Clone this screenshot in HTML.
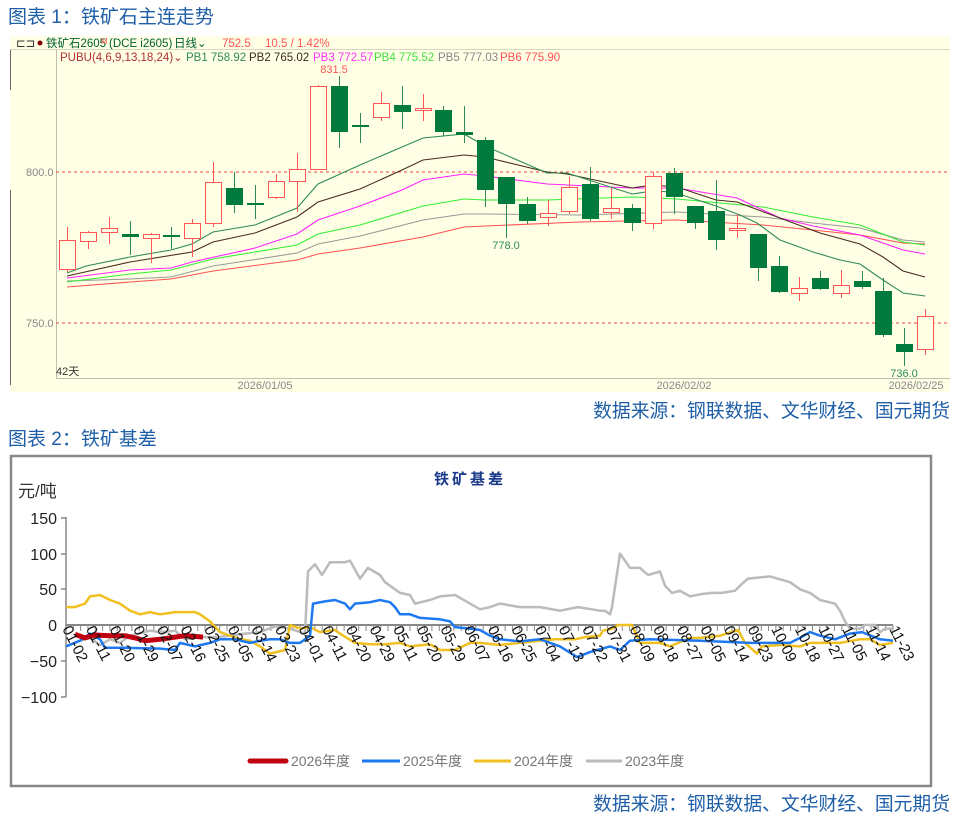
<!DOCTYPE html>
<html><head><meta charset="utf-8"><style>
html,body{margin:0;padding:0;background:#fff;width:962px;height:817px;overflow:hidden}
svg{position:absolute;left:0;top:0}
text{font-family:"Liberation Sans","Noto Sans CJK SC",sans-serif}
</style></head><body>
<svg width="962" height="817" viewBox="0 0 962 817" xmlns="http://www.w3.org/2000/svg">
<!-- Titles -->
<text x="8" y="23" font-size="19" fill="#1F5FA8">图表 1：铁矿石主连走势</text>
<text x="8" y="445" font-size="19" fill="#1F5FA8">图表 2：铁矿基差</text>
<text x="950" y="417" font-size="18.8" fill="#1F5FA8" text-anchor="end">数据来源：钢联数据、文华财经、国元期货</text>
<text x="950" y="810" font-size="18.8" fill="#1F5FA8" text-anchor="end">数据来源：钢联数据、文华财经、国元期货</text>

<!-- Chart 1 background -->
<rect x="10" y="36" width="940" height="356" fill="#FFFFE6"/>
<line x1="10" y1="49.5" x2="950" y2="49.5" stroke="#d8d8c0" stroke-width="1"/>
<line x1="56.5" y1="50" x2="56.5" y2="378" stroke="#c0c0b0" stroke-width="1"/>
<line x1="56" y1="378.5" x2="950" y2="378.5" stroke="#c0c0b0" stroke-width="1"/>
<line x1="10.5" y1="50" x2="10.5" y2="90" stroke="#666" stroke-width="1"/>
<line x1="10.5" y1="190" x2="10.5" y2="385" stroke="#666" stroke-width="1"/>
<g font-size="11.5">
<text x="16" y="47" fill="#333">⊏⊐</text>
<circle cx="40" cy="43" r="2.5" fill="#800000"/>
<text x="46" y="47" fill="#006030">铁矿石2605</text>
<text x="101" y="44" fill="#f55" font-size="8">M</text>
<text x="109" y="47" fill="#006030">(DCE i2605)</text>
<text x="174" y="47" fill="#006030">日线⌄</text>
<text x="222" y="47" fill="#f55">752.5</text>
<text x="265" y="47" fill="#f55">10.5 / 1.42%</text>
<text x="60" y="61" fill="#b03030">PUBU(4,6,9,13,18,24)⌄</text>
<text x="186" y="61" fill="#2E8B57">PB1 758.92</text>
<text x="249" y="61" fill="#3a2a20">PB2 765.02</text>
<text x="313" y="61" fill="#ff33ff">PB3 772.57</text>
<text x="374" y="61" fill="#44dd44">PB4 775.52</text>
<text x="438" y="61" fill="#888">PB5 777.03</text>
<text x="500" y="61" fill="#ff5050">PB6 775.90</text>
</g>
<line x1="56" y1="172" x2="950" y2="172" stroke="#ee4444" stroke-dasharray="3,3" stroke-width="1"/>
<line x1="56" y1="323" x2="950" y2="323" stroke="#ee4444" stroke-dasharray="3,3" stroke-width="1"/>
<g font-size="11" fill="#888">
<text x="26" y="176">800.0</text>
<text x="26" y="327">750.0</text>
<text x="265" y="389" text-anchor="middle">2026/01/05</text>
<text x="684" y="389" text-anchor="middle">2026/02/02</text>
<text x="916" y="389" text-anchor="middle">2026/02/25</text>
</g>
<text x="56" y="375" font-size="11" fill="#333">42天</text>
<text x="334" y="73" font-size="11" fill="#f55" text-anchor="middle">831.5</text>
<text x="506" y="249" font-size="11" fill="#2E8B57" text-anchor="middle">778.0</text>
<text x="904" y="377" font-size="11" fill="#2E8B57" text-anchor="middle">736.0</text>

<!-- MA lines -->
<g fill="none" stroke-width="1.1">
<polyline stroke="#ff5050" points="67,287 130,282 171,279 213,271 297,260 318,254 360,248 423,237 464,227 485,226 580,222 677,220 763,225 813,230 860,235 903,243 925,244"/>
<polyline stroke="#999" points="67,281 130,279 171,277 213,266 297,253 318,244 360,236 423,220 464,214 485,214 580,215 677,212 763,217 813,223 860,228 903,240 925,242"/>
<polyline stroke="#33ee33" points="67,282 130,274 171,270 213,259 297,245 318,234 360,225 423,206 464,199 485,200 547,200 632,197 677,199 763,207 813,217 860,225 903,242 925,245"/>
<polyline stroke="#ff22ff" points="67,278 130,270 171,268 192,262 255,248 297,234 318,220 360,206 402,190 423,180 464,174 485,176 547,184 632,188 677,188 737,198 780,218 813,226 860,235 903,250 925,254"/>
<polyline stroke="#4a2a20" points="67,276 130,262 192,252 213,242 255,233 297,217 318,202 360,189 402,170 423,160 464,155 485,157 547,172 567,174 632,188 653,185 677,187 716,200 737,202 780,218 820,233 860,244 883,257 903,271 925,277"/>
<polyline stroke="#2E8B57" points="67,273 86,266 130,257 171,250 192,244 213,232 255,225 297,208 318,184 360,165 402,147 423,138 464,134 485,146 547,173 567,173 632,194 653,191 673,192 716,206 740,215 757,223 780,240 813,252 840,260 860,264 883,280 903,293 925,296"/>
</g>

<!-- Candles -->
<g id="c" stroke-width="1"></g>

<!-- Chart 2 -->
<rect x="11" y="456" width="920" height="330" fill="#fff" stroke="#888" stroke-width="2.5"/>
<text x="470" y="484" font-size="15" font-weight="bold" fill="#1a3a8a" text-anchor="middle" font-family="Liberation Serif,'Noto Serif CJK SC',serif" letter-spacing="3">铁矿基差</text>
<text x="18" y="497" font-size="17" fill="#333">元/吨</text>
<g font-size="16" fill="#222" text-anchor="end">
<text x="57" y="524">150</text>
<text x="57" y="560">100</text>
<text x="57" y="595">50</text>
<text x="57" y="631">0</text>
<text x="57" y="667">−50</text>
<text x="57" y="703">−100</text>
</g>
<g stroke="#888" stroke-width="1.5">
<line x1="66" y1="517" x2="66" y2="697"/>
<line x1="61" y1="518" x2="66" y2="518"/>
<line x1="61" y1="554" x2="66" y2="554"/>
<line x1="61" y1="589" x2="66" y2="589"/>
<line x1="61" y1="661" x2="66" y2="661"/>
<line x1="61" y1="697" x2="66" y2="697"/>
</g>
<g id="ticks" stroke="#888" stroke-width="1"></g>
<line x1="66" y1="625" x2="893" y2="625" stroke="#888" stroke-width="2"/>
<g fill="none" stroke-linejoin="round" stroke-width="2.5">
<polyline id="gray" stroke="#bbb"/>
<polyline id="yellow" stroke="#F0C020"/>
<polyline id="blue" stroke="#1E78F0"/>
<polyline id="red" stroke="#C00010" stroke-width="5"/>
</g>
<g id="labels" font-size="15" fill="#111"></g>
<g font-size="14" fill="#777">
<line x1="250" y1="761" x2="286" y2="761" stroke="#C00010" stroke-width="5" stroke-linecap="round"/>
<text x="291" y="766">2026年度</text>
<line x1="362" y1="761" x2="400" y2="761" stroke="#1E78F0" stroke-width="3"/>
<text x="403" y="766">2025年度</text>
<line x1="474" y1="761" x2="511" y2="761" stroke="#F0C020" stroke-width="3"/>
<text x="514" y="766">2024年度</text>
<line x1="586" y1="761" x2="622" y2="761" stroke="#bbb" stroke-width="3"/>
<text x="625" y="766">2023年度</text>
</g>
</svg>
<script>
var NS="http://www.w3.org/2000/svg";
function el(t,a,p){var e=document.createElementNS(NS,t);for(var k in a)e.setAttribute(k,a[k]);p.appendChild(e);return e;}
var C=[[67,240,269,227,272,'r'],[88,232,241,231,249,'r'],[109,228,232,217,244,'r'],[130,234,237,221,255,'g'],[151,234,238,233,263,'r'],[171,235,237,227,249,'g'],[192,223,238,219,257,'r'],[213,182,223,162,227,'r'],[234,188,205,172,213,'g'],[255,203,204,185,219,'g'],[276,181,197,174,199,'r'],[297,169,181,153,212,'r'],[318,86,169,85,169,'r'],[339,86,132,76,148,'g'],[360,125,127,113,143,'g'],[381,103,117,92,121,'r'],[402,105,112,86,129,'g'],[423,108,110,94,121,'r'],[443,110,132,106,136,'g'],[464,132,135,106,143,'g'],[485,140,190,137,207,'g'],[506,177,204,177,238,'g'],[527,204,221,197,224,'g'],[548,213,217,200,226,'r'],[569,187,211,177,214,'r'],[590,184,219,167,221,'g'],[611,208,212,188,219,'r'],[632,208,223,204,231,'g'],[653,176,223,172,229,'r'],[674,173,197,168,214,'g'],[695,206,223,206,229,'g'],[716,211,240,180,250,'g'],[737,228,230,214,238,'r'],[758,234,268,234,281,'g'],[779,266,292,256,293,'g'],[799,288,293,277,301,'r'],[820,278,289,271,290,'g'],[841,285,293,270,298,'r'],[862,281,287,271,289,'g'],[883,291,335,278,337,'g'],[904,344,352,328,366,'g'],[925,316,349,309,355,'r']];
var g=document.getElementById('c');
C.forEach(function(c){var x=c[0]+0.5;
 if(c[5]=='g'){el('line',{x1:x,y1:c[3],x2:x,y2:c[4],stroke:'#2E8B57'},g);el('rect',{x:c[0]-8,y:c[1],width:17,height:Math.max(2,c[2]-c[1]),fill:'#007A3D'},g);}
 else{el('line',{x1:x,y1:c[3],x2:x,y2:c[1],stroke:'#f55'},g);el('line',{x1:x,y1:c[2],x2:x,y2:c[4],stroke:'#f55'},g);el('rect',{x:c[0]-7.5,y:c[1]+0.5,width:16,height:Math.max(1,c[2]-c[1]),fill:'#FFFFE6',stroke:'#f55'},g);}
});
function pts(a){return a.map(function(p){return p[0]+','+(625-p[1]*0.714).toFixed(1)}).join(' ');}
document.getElementById('gray').setAttribute('points',pts([[66,-30],[80,-22],[90,-18],[100,-28],[110,-20],[120,-25],[130,-15],[150,-8],[160,-10],[175,-8],[185,-20],[200,-17],[215,-17],[230,-15],[245,-12],[260,-10],[275,-2],[290,-5],[300,-10],[305,-12],[308,75],[315,85],[322,70],[330,88],[345,88],[350,90],[360,65],[368,80],[380,70],[385,60],[395,50],[400,45],[410,42],[415,30],[430,35],[440,40],[455,42],[470,30],[480,22],[490,25],[500,30],[520,25],[540,25],[560,20],[578,25],[600,20],[605,20],[610,15],[612,25],[620,100],[625,90],[630,80],[640,80],[648,70],[660,75],[665,55],[672,45],[680,48],[690,40],[700,43],[712,45],[722,45],[735,48],[740,55],[748,65],[770,68],[790,60],[800,50],[810,45],[820,35],[835,30],[840,20],[845,5],[850,-5],[860,-5],[865,0],[875,0],[880,-10],[885,-5],[893,-5]]));
document.getElementById('yellow').setAttribute('points',pts([[66,25],[75,25],[85,30],[90,40],[100,42],[110,35],[120,30],[125,25],[130,20],[140,15],[150,18],[160,15],[175,18],[195,18],[200,15],[210,5],[220,-10],[230,-15],[240,-20],[250,-22],[260,-30],[270,-40],[285,-35],[290,0],[300,-5],[310,-3],[320,-10],[335,-7],[340,-12],[355,-25],[370,-27],[385,-27],[400,-25],[410,-30],[430,-27],[440,-35],[455,-35],[470,-25],[480,-25],[500,-28],[520,-25],[540,-22],[555,-20],[575,-20],[585,-17],[600,-15],[603,-8],[612,-5],[618,0],[632,0],[640,-25],[660,-25],[670,-30],[690,-18],[700,-18],[720,-15],[738,-7],[745,-25],[757,-40],[762,-30],[780,-28],[800,-30],[810,-25],[820,-25],[840,-25],[860,-20],[870,-20],[880,-28],[893,-25]]));
document.getElementById('blue').setAttribute('points',pts([[66,-30],[80,-22],[90,-12],[100,-20],[105,-32],[125,-32],[160,-33],[175,-35],[180,-25],[195,-30],[210,-25],[220,-20],[235,-20],[250,-25],[260,-22],[270,-20],[280,-20],[290,-25],[300,-25],[305,-20],[310,-15],[313,30],[325,33],[335,35],[345,30],[350,22],[355,30],[370,32],[380,35],[390,32],[395,25],[400,15],[410,15],[420,10],[440,8],[450,5],[455,-3],[470,-5],[480,-7],[490,-15],[500,-20],[520,-23],[540,-20],[560,-30],[577,-45],[590,-38],[610,-30],[620,-35],[630,-22],[650,-20],[700,-22],[750,-25],[770,-25],[790,-25],[800,-18],[810,-10],[820,-15],[835,-20],[850,-12],[862,-10],[880,-20],[893,-22]]));
document.getElementById('red').setAttribute('points',pts([[75,-13],[85,-18],[95,-14],[110,-15],[125,-15],[135,-18],[145,-22],[160,-20],[175,-17],[185,-15],[195,-16],[203,-17]]));
var L="01-02,01-11,01-20,01-29,02-07,02-16,02-25,03-05,03-14,03-23,04-01,04-11,04-20,04-29,05-11,05-20,05-29,06-07,06-16,06-25,07-04,07-13,07-22,07-31,08-09,08-18,08-27,09-05,09-14,09-23,10-09,10-18,10-27,11-05,11-14,11-23".split(',');
var lg=document.getElementById('labels'),tk=document.getElementById('ticks');
for(var i=0;i<=113;i++){var tx=66+i*827/113;el('line',{x1:tx,y1:625,x2:tx,y2:631},tk);}
L.forEach(function(s,i){var x=66+i*827/35;var t=el('text',{x:0,y:0,transform:'translate('+(x-4)+',629) rotate(63)'},lg);t.textContent=s;});
</script>
</body></html>
